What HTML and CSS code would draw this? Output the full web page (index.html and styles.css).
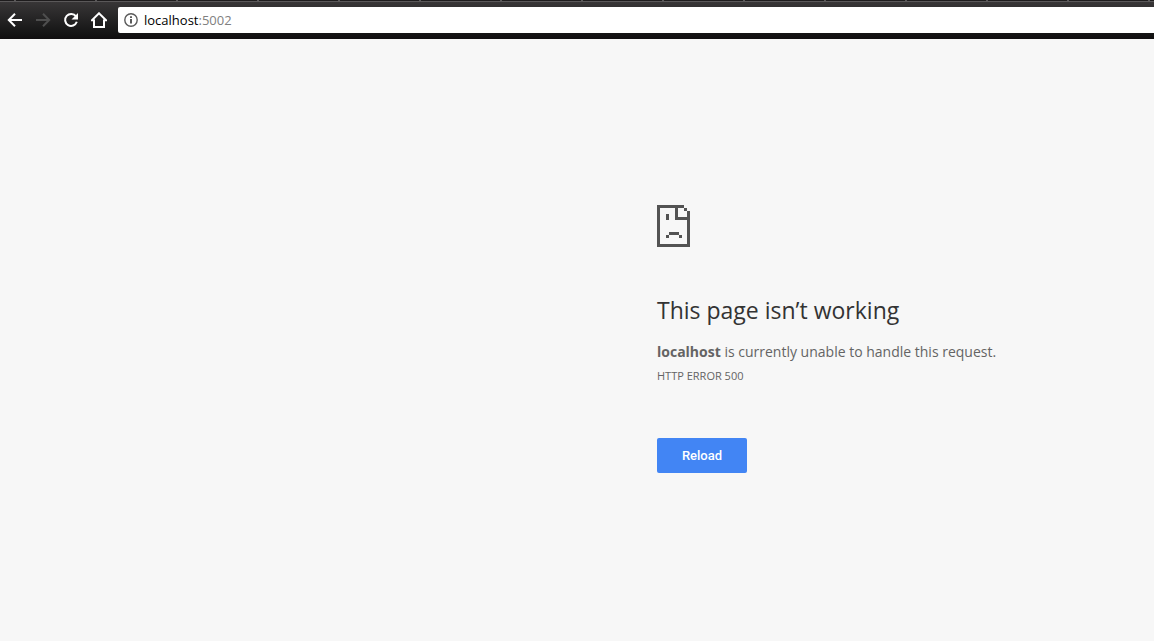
FILE: index.html
```html
<!DOCTYPE html>
<html lang="en">
<head>
<meta charset="utf-8">
<meta name="viewport" content="width=device-width, initial-scale=1">
<title>localhost</title>
<link rel="stylesheet" href="styles.css">
</head>
<body>
<header class="browser">
  <div class="tabs"></div>
  <nav class="toolbar" aria-label="Browser">
    <button class="tool" type="button" aria-label="Back">
      <svg viewBox="0 0 16 16"><path d="M15 8H2.500M8 1.800L1.800 8L8 14.200"/></svg>
    </button>
    <button class="tool" type="button" aria-label="Forward" disabled>
      <svg viewBox="0 0 16 16"><path d="M1 8h12.500M8 1.800L14.200 8L8 14.200"/></svg>
    </button>
    <button class="tool" type="button" aria-label="Reload page">
      <svg viewBox="0 0 16 16"><path d="M13 4.400A6 6 0 1 0 13.800 9.800"/><path class="solid" d="M15 1v6.500H8.500z"/></svg>
    </button>
    <button class="tool" type="button" aria-label="Home">
      <svg viewBox="0 0 16 16"><path d="M3 8.300H.9L8 1.300l7.100 7H13M3 7.500V15h10V7.500"/></svg>
    </button>
    <div class="address">
      <svg class="info" viewBox="0 0 14 14"><circle cx="7" cy="7" r="6.200"/><path d="M7 6v4.500M7 3.300v1.600"/></svg>
      <a class="url" href="#">localhost<span class="port">:5002</span></a>
    </div>
  </nav>
</header>
<main class="error">
  <svg class="sad" viewBox="0 0 33 42" aria-hidden="true"><path d="M0 0H27V3H21V12H33V15H18V3H3V39H30V15H33V42H0ZM27 3h3v3h-3ZM30 6h3v9h-3ZM9 9h3v6H9ZM12 27h10v3H12ZM9 30h3v3H9ZM22 30h3v3h-3Z"/></svg>
  <h1 class="title">This page isn’t working</h1>
  <p class="message"><strong>localhost</strong> is currently unable to handle this request.</p>
  <p class="code">HTTP ERROR 500</p>
  <button class="reload" type="button">Reload</button>
</main>
</body>
</html>
```
FILE: styles.css
```css
* {
  box-sizing: border-box;
}

body {
  margin: 0;
  min-height: 100vh;
  background: #f7f7f7;
  color: #646464;
  font-family: "Open Sans", "Noto Sans", sans-serif;
}

.browser {
  background: linear-gradient(#3a3839, #141414 34px, #100e0f);
}

.tabs {
  height: 2px;
  border-bottom: 1px solid #5a5859;
  background: repeating-linear-gradient(90deg, #1e1c1d 0 14px, #5a5859 14px 16px, #1e1c1d 16px 81px);
}

.toolbar {
  display: flex;
  align-items: center;
  height: 37px;
  padding: 5px 0 6px 1px;
}

.tool {
  display: grid;
  place-items: center;
  width: 28px;
  height: 26px;
  padding: 0;
  border: 0;
  background: none;
  color: #fff;
}

.tool:disabled {
  color: #4e4e4e;
}

.tool svg {
  width: 16px;
  height: 16px;
  fill: none;
  stroke: currentColor;
  stroke-width: 2;
}

.tool .solid {
  fill: currentColor;
  stroke: none;
}

.address {
  display: flex;
  flex: 1;
  align-items: center;
  gap: 6px;
  height: 26px;
  margin-left: 5px;
  padding-left: 6px;
  border-radius: 2px 0 0 2px;
  background: #fff;
}

.info {
  width: 14px;
  height: 14px;
  fill: none;
  stroke: #5a5a5a;
  stroke-width: 2;
}

.info circle {
  stroke-width: 1.4;
}

.url {
  color: #000;
  font-size: 13px;
  line-height: 18px;
  text-decoration: none;
}

.port {
  color: #808080;
}

.error {
  margin-left: calc(50% + 80px);
  padding-top: 166px;
}

.sad {
  display: block;
  width: 33px;
  height: 42px;
  fill: #535353;
  shape-rendering: crispEdges;
}

.title {
  margin: 48px 0 16px;
  color: #333;
  font-size: 23px;
  font-weight: 400;
  line-height: 30px;
}

.message {
  margin: 0;
  font-size: 14px;
  line-height: 22px;
}

.code {
  margin: 3px 0 0;
  font-size: 11px;
  line-height: 20px;
}

.reload {
  display: block;
  width: 90px;
  height: 35px;
  margin-top: 52px;
  padding: 0;
  border: 0;
  border-radius: 2px;
  background: #4285f4;
  color: #fff;
  font: 500 13px Roboto, sans-serif;
}
```
